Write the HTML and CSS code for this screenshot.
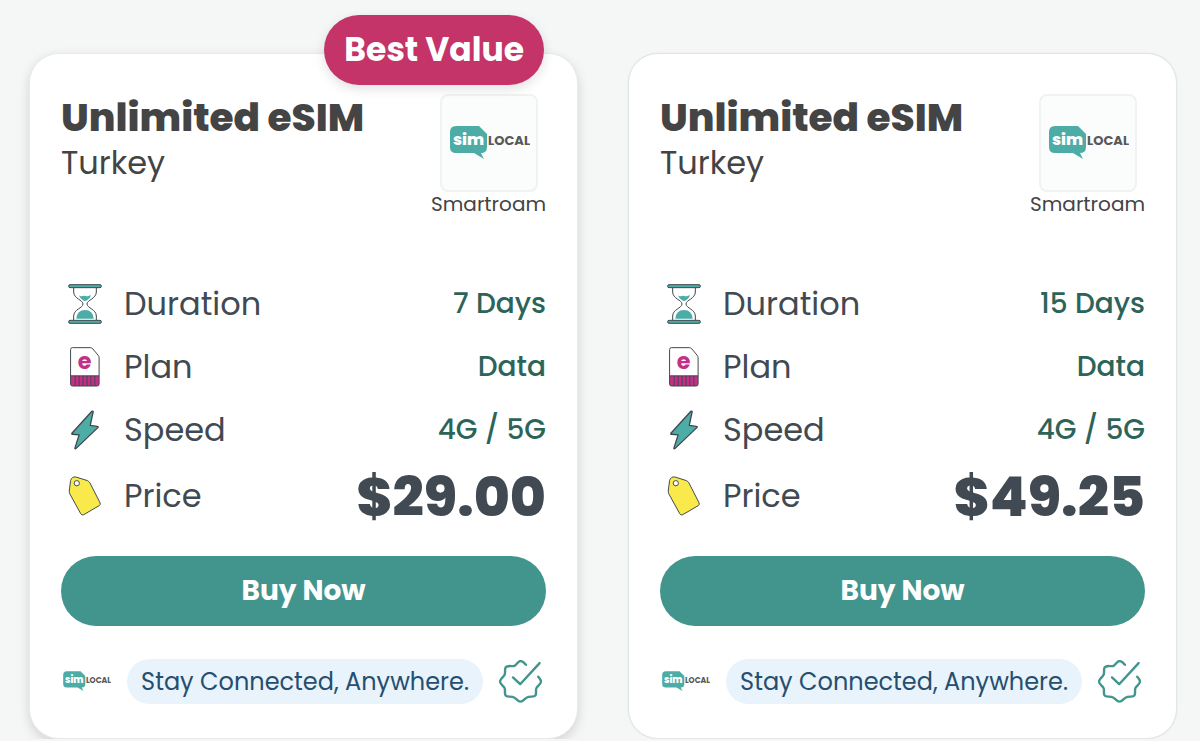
FILE: index.html
```html
<!DOCTYPE html>
<html lang="en">
<head>
    <meta charset="UTF-8">
    <meta name="viewport" content="width=device-width, initial-scale=1.0">
    <title>Unlimited eSIM Turkey</title>
    <link rel="stylesheet" href="styles.css">
</head>
<body>
    <!-- shared icons -->
    <svg class="sprite" aria-hidden="true">
        <symbol id="logo" viewBox="0 0 82 34">
            <path fill="#4dada6" d="M8 0h23l8 8v13q0 6-6 6h0l3 6-10-6H8q-6 0-6-6V6q0-6 6-6z"/>
            <text class="logo-sim" x="5" y="19">sim</text>
            <text class="logo-local" x="40" y="19">LOCAL</text>
        </symbol>
        <symbol id="hourglass" viewBox="0 0 102 120">
            <g fill="none" stroke="#3f474c" stroke-width="3">
                <path d="M17 11v13c0 20 28 24 28 36s-28 16-28 36v13M85 11v13c0 20-28 24-28 36s28 16 28 36v13"/>
                <rect x="2" y="2" width="98" height="9" rx="4" fill="#4dada6"/>
                <rect x="2" y="109" width="98" height="9" rx="4" fill="#4dada6"/>
            </g>
            <path fill="#4dada6" d="M33 34q4 4 10 2t10 0 8 0 8-2q-2 9-12 15-6 4-12 0-10-6-12-15zM25 104q2-26 26-26t26 26z"/>
        </symbol>
        <symbol id="sim" viewBox="0 0 92 122">
            <path fill="#fff" d="M8 2h54l27 27v90H2V8q0-6 6-6z"/>
            <path fill="#c42f87" d="M2 88h87v25q0 6-6 6H8q-6 0-6-6z"/>
            <path fill="none" stroke="#3f474c" stroke-width="3" d="M8 2h54q5 0 8 4l16 19q3 4 3 8v80q0 6-6 6H8q-6 0-6-6V8q0-6 6-6zM2 88h87M16 88v31M28 88v31M40 88v31M52 88v31M64 88v31M76 88v31"/>
            <text class="sim-e" x="45" y="67">e</text>
        </symbol>
        <symbol id="bolt" viewBox="0 0 86 122">
            <path fill="#4dada6" stroke="#3f474c" stroke-width="4" stroke-linejoin="round" d="M64 4 3 71q-1 3 2 3l20 2-13 41q1 3 4 0l67-64q1-3-2-3l-22-3L68 5q-1-3-4-1z"/>
        </symbol>
        <symbol id="tag" viewBox="0 0 100 122">
            <path fill="#fae94b" stroke="#3f474c" stroke-width="3" stroke-linejoin="round" d="M22 3 57 14q5 2 8 7l31 61q2 5-2 8l-48 28q-6 3-9-3L4 55q-2-4-2-9l4-32Q10 1 22 3z"/>
            <circle cx="25" cy="22" r="8" fill="#fff" stroke="#3f474c" stroke-width="3"/>
        </symbol>
        <symbol id="verified" viewBox="0 0 126 126">
            <g fill="none" stroke="#42958d" stroke-width="7" stroke-linecap="round" stroke-linejoin="round">
                <path d="M79 14C73 7 69 3 63 3 54 3 52 17 42 18 30 18 19 15 18 26 17 36 20 40 14 47 8 53 3 57 3 63 3 70 10 74 15 80 20 86 16 92 18 101 20 110 30 106 40 108 50 110 54 122 63 122 72 122 76 110 86 108 96 106 106 110 108 101 110 92 106 86 111 80 116 74 123 70 123 63 123 57 119 54 115 49"/>
                <path d="M41 51 62 71 119 9"/>
            </g>
        </symbol>
    </svg>

    <main class="plans">
        <article class="card featured">
            <span class="badge">Best Value</span>
            <header class="card-header">
                <div>
                    <h2>Unlimited eSIM</h2>
                    <p class="country">Turkey</p>
                </div>
                <div class="provider">
                    <div class="provider-logo"><svg role="img" aria-label="Sim Local"><use href="#logo"/></svg></div>
                    <span>Smartroam</span>
                </div>
            </header>
            <dl class="details">
                <div class="row">
                    <dt><svg class="icon"><use href="#hourglass"/></svg>Duration</dt>
                    <dd>7 Days</dd>
                </div>
                <div class="row">
                    <dt><svg class="icon"><use href="#sim"/></svg>Plan</dt>
                    <dd>Data</dd>
                </div>
                <div class="row">
                    <dt><svg class="icon"><use href="#bolt"/></svg>Speed</dt>
                    <dd>4G / 5G</dd>
                </div>
                <div class="row price">
                    <dt><svg class="icon"><use href="#tag"/></svg>Price</dt>
                    <dd>$29.00</dd>
                </div>
            </dl>
            <button class="buy" type="button">Buy Now</button>
            <footer class="card-footer">
                <svg class="logo-small" role="img" aria-label="Sim Local"><use href="#logo"/></svg>
                <span class="tagline">Stay Connected, Anywhere.</span>
                <svg class="verified"><use href="#verified"/></svg>
            </footer>
        </article>

        <article class="card">
            <header class="card-header">
                <div>
                    <h2>Unlimited eSIM</h2>
                    <p class="country">Turkey</p>
                </div>
                <div class="provider">
                    <div class="provider-logo"><svg role="img" aria-label="Sim Local"><use href="#logo"/></svg></div>
                    <span>Smartroam</span>
                </div>
            </header>
            <dl class="details">
                <div class="row">
                    <dt><svg class="icon"><use href="#hourglass"/></svg>Duration</dt>
                    <dd>15 Days</dd>
                </div>
                <div class="row">
                    <dt><svg class="icon"><use href="#sim"/></svg>Plan</dt>
                    <dd>Data</dd>
                </div>
                <div class="row">
                    <dt><svg class="icon"><use href="#bolt"/></svg>Speed</dt>
                    <dd>4G / 5G</dd>
                </div>
                <div class="row price">
                    <dt><svg class="icon"><use href="#tag"/></svg>Price</dt>
                    <dd>$49.25</dd>
                </div>
            </dl>
            <button class="buy" type="button">Buy Now</button>
            <footer class="card-footer">
                <svg class="logo-small" role="img" aria-label="Sim Local"><use href="#logo"/></svg>
                <span class="tagline">Stay Connected, Anywhere.</span>
                <svg class="verified"><use href="#verified"/></svg>
            </footer>
        </article>
    </main>
</body>
</html>
```
FILE: styles.css
```css
:root {
    --bg: #f5f7f7;
    --title: #444;
    --text: #414a52;
    --value: #2c6459;
    --teal: #42958d;
    --pink: #c43468;
    --border: #e2e5e5;
}

* {
    box-sizing: border-box;
}

body {
    margin: 0;
    background: var(--bg);
    color: var(--text);
    font-family: Poppins, Inter, sans-serif;
}

h2, p, dl, dd {
    margin: 0;
}

.sprite {
    position: absolute;
    width: 0;
    height: 0;
}

.plans {
    display: grid;
    grid-template-columns: 1fr 1fr;
    gap: 50px;
    padding: 53px 23px 0 29px;
}

.card {
    position: relative;
    background: #fff;
    border: 1px solid var(--border);
    border-radius: 30px;
    padding: 40px 31px 34px;
    box-shadow: 0 0 2px rgba(0, 0, 0, 0.08);
}

.card.featured {
    border-color: #e9ebeb;
    box-shadow: 0 4px 12px rgba(0, 0, 0, 0.14);
}

.badge {
    position: absolute;
    top: -39px;
    right: 33px;
    padding: 0 20px;
    line-height: 70px;
    border-radius: 36px;
    background: var(--pink);
    color: #fff;
    font-size: 33px;
    font-weight: 700;
    box-shadow: 0 4px 12px rgba(0, 0, 0, 0.12);
}

.card-header {
    display: flex;
    justify-content: space-between;
    align-items: flex-start;
    color: var(--title);
}

.card-header h2 {
    font-size: 39px;
    line-height: 48px;
    font-weight: 800;
}

.country {
    font-size: 32px;
    line-height: 42px;
}

.provider {
    display: flex;
    flex-direction: column;
    align-items: center;
    font-size: 20px;
    line-height: 24px;
}

.provider-logo {
    display: grid;
    place-items: center;
    width: 98px;
    height: 98px;
    border: 2px solid #f1f2f2;
    border-radius: 8px;
    background: #fbfcfc;
}

.provider-logo svg {
    width: 82px;
    height: 34px;
}

.logo-sim {
    fill: #fff;
    font-size: 16px;
    font-weight: 800;
}

.logo-local {
    fill: #585858;
    font-size: 13px;
    font-weight: 700;
}

.sim-e {
    fill: #c42f87;
    font-size: 68px;
    font-weight: 700;
    text-anchor: middle;
}

.details {
    margin: 56px 0 25px;
}

.row {
    display: flex;
    justify-content: space-between;
    align-items: center;
    height: 63px;
}

.row dt {
    display: flex;
    align-items: center;
    gap: 15px;
    font-size: 32px;
}

.row dd {
    color: var(--value);
    font-size: 28px;
    font-weight: 500;
}

.row.price {
    height: 70px;
}

.row.price dd {
    color: var(--text);
    font-size: 55px;
    font-weight: 800;
}

.icon {
    width: 48px;
    height: 40px;
}

.buy {
    display: block;
    width: 100%;
    height: 70px;
    border: none;
    border-radius: 35px;
    background: var(--teal);
    color: #fff;
    font-family: inherit;
    font-size: 28px;
    font-weight: 700;
    cursor: pointer;
}

.card-footer {
    display: flex;
    justify-content: space-between;
    align-items: center;
    margin-top: 33px;
    padding: 0 4px 0 1px;
}

.logo-small {
    width: 49px;
    height: 21px;
}

.tagline {
    padding: 0 14px;
    border-radius: 23px;
    background: #e8f3fc;
    color: #264e6e;
    font-size: 24px;
    line-height: 45px;
}

.verified {
    width: 43px;
    height: 43px;
}
```
